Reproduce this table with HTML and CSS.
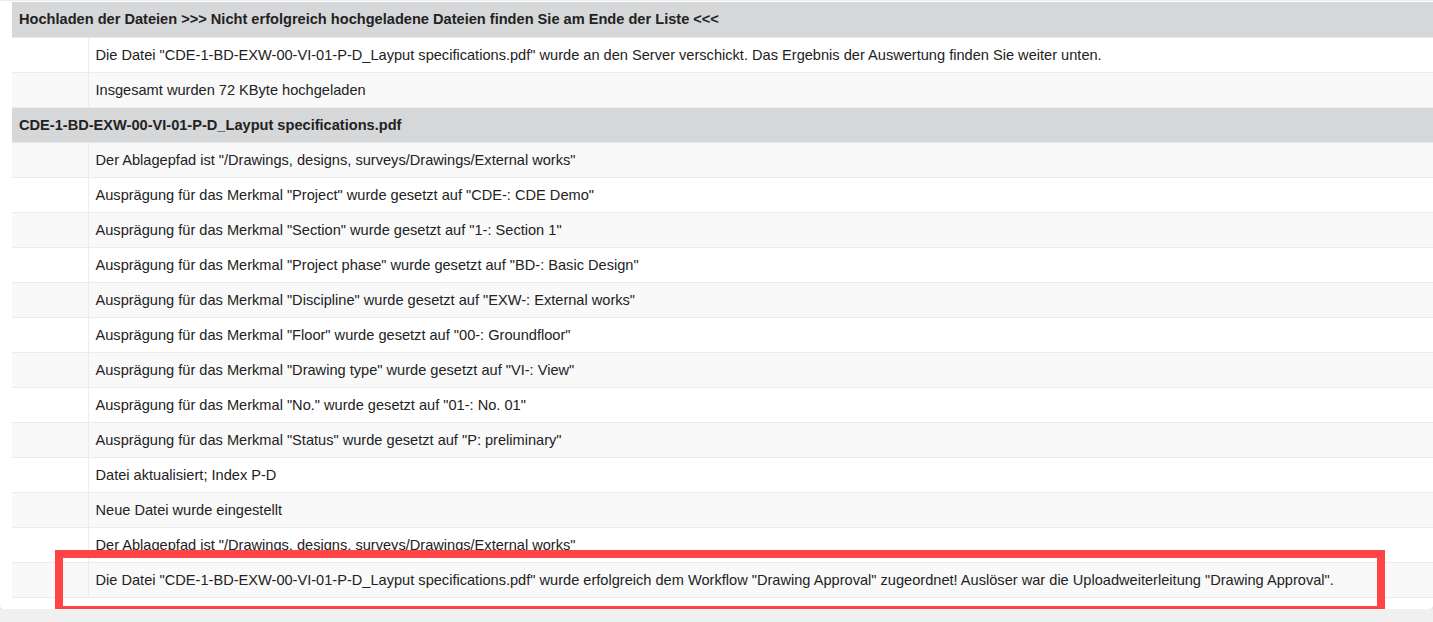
FILE: index.html
```html
<!DOCTYPE html>
<html lang="de">
<head>
<meta charset="utf-8">
<title>Upload</title>
<link rel="stylesheet" href="styles.css">
</head>
<body>
<div class="card">
  <table class="log">
    <tbody>
      <tr class="head"><td colspan="2">Hochladen der Dateien &gt;&gt;&gt; Nicht erfolgreich hochgeladene Dateien finden Sie am Ende der Liste &lt;&lt;&lt;</td></tr>
      <tr><td class="gap"></td><td>Die Datei "CDE-1-BD-EXW-00-VI-01-P-D_Layput specifications.pdf" wurde an den Server verschickt. Das Ergebnis der Auswertung finden Sie weiter unten.</td></tr>
      <tr><td class="gap"></td><td>Insgesamt wurden 72 KByte hochgeladen</td></tr>
      <tr class="head"><td colspan="2">CDE-1-BD-EXW-00-VI-01-P-D_Layput specifications.pdf</td></tr>
      <tr><td class="gap"></td><td>Der Ablagepfad ist "/Drawings, designs, surveys/Drawings/External works"</td></tr>
      <tr><td class="gap"></td><td>Ausprägung für das Merkmal "Project" wurde gesetzt auf "CDE-: CDE Demo"</td></tr>
      <tr><td class="gap"></td><td>Ausprägung für das Merkmal "Section" wurde gesetzt auf "1-: Section 1"</td></tr>
      <tr><td class="gap"></td><td>Ausprägung für das Merkmal "Project phase" wurde gesetzt auf "BD-: Basic Design"</td></tr>
      <tr><td class="gap"></td><td>Ausprägung für das Merkmal "Discipline" wurde gesetzt auf "EXW-: External works"</td></tr>
      <tr><td class="gap"></td><td>Ausprägung für das Merkmal "Floor" wurde gesetzt auf "00-: Groundfloor"</td></tr>
      <tr><td class="gap"></td><td>Ausprägung für das Merkmal "Drawing type" wurde gesetzt auf "VI-: View"</td></tr>
      <tr><td class="gap"></td><td>Ausprägung für das Merkmal "No." wurde gesetzt auf "01-: No. 01"</td></tr>
      <tr><td class="gap"></td><td>Ausprägung für das Merkmal "Status" wurde gesetzt auf "P: preliminary"</td></tr>
      <tr><td class="gap"></td><td>Datei aktualisiert; Index P-D</td></tr>
      <tr><td class="gap"></td><td>Neue Datei wurde eingestellt</td></tr>
      <tr><td class="gap"></td><td>Der Ablagepfad ist "/Drawings, designs, surveys/Drawings/External works"</td></tr>
      <tr><td class="gap"></td><td>Die Datei "CDE-1-BD-EXW-00-VI-01-P-D_Layput specifications.pdf" wurde erfolgreich dem Workflow "Drawing Approval" zugeordnet! Auslöser war die Uploadweiterleitung "Drawing Approval".</td></tr>
    </tbody>
  </table>
  <div class="highlight"></div>
</div>
</body>
</html>
```
FILE: styles.css
```css
html, body {
  margin: 0;
  padding: 0;
  background: #f0f0f0;
  font-family: "Liberation Sans", Arial, sans-serif;
  font-size: 14.6px;
  color: #222;
}
.card {
  position: relative;
  margin-top: 1px;
  background: #fff;
  padding: 1px 0 11px 12px;
  border-radius: 0 0 4px 4px;
  box-shadow: 0 1px 3px rgba(0,0,0,0.12);
}
.log {
  width: 100%;
  border-collapse: collapse;
}
.log td {
  height: 35px;
  padding: 0 7px;
  line-height: 18px;
  border-bottom: 1px solid #ececec;
  box-sizing: border-box;
  vertical-align: middle;
}
.log tr:nth-child(odd) td { background: #f9f9f9; }
.log tr:nth-child(even) td { background: #fff; }
.log td.gap {
  width: 76px;
  padding: 0;
  border-right: 1px solid #ececec;
}
.log tr.head td {
  background: #d6d7d9;
  font-weight: bold;
  border-bottom: 1px solid #e8e8e8;
}
.highlight {
  position: absolute;
  left: 55px;
  top: 549px;
  width: 1330px;
  height: 64px;
  border: 8px solid #fe4444;
  box-sizing: border-box;
  pointer-events: none;
}
```
